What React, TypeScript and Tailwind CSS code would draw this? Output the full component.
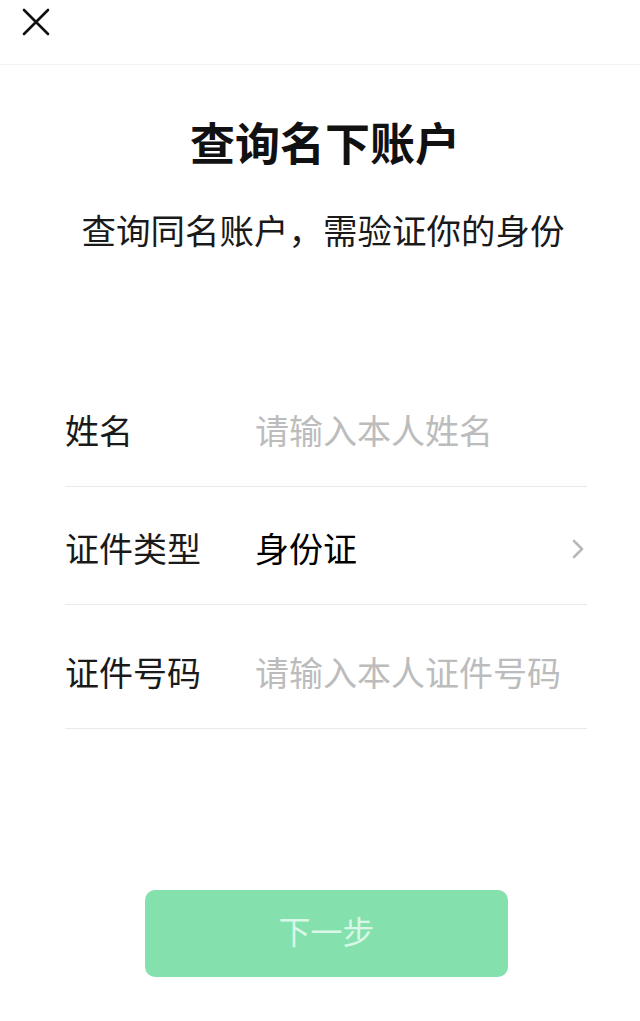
const font = "font-['Noto_Sans_CJK_SC','Noto_Sans',sans-serif]";

function Row({
  label,
  value,
  placeholder,
  chevron,
  height,
}: {
  label: string;
  value?: string;
  placeholder?: string;
  chevron?: boolean;
  height: string;
}) {
  return (
    <div className={`flex items-end border-b border-[#e9e9e9] pb-[39px] ${height}`}>
      <span className="w-[190px] shrink-0 text-[34px] leading-[34px] text-[#1a1a1a]">{label}</span>
      {value ? (
        <span className="flex-1 text-[34px] leading-[34px] text-[#000]">{value}</span>
      ) : (
        <span className="flex-1 text-[34px] leading-[34px] text-[#bcbcbc]">{placeholder}</span>
      )}
      {chevron && (
        <svg width="14" height="20" viewBox="0 0 14 20" className="mb-[6px] mr-[2px]">
          <polyline points="3,2 11,10 3,18" fill="none" stroke="#b9b9b9" strokeWidth="2.6" strokeLinecap="round" strokeLinejoin="round" />
        </svg>
      )}
    </div>
  );
}

export default function App() {
  return (
    <div className={`min-h-[1021px] w-[640px] bg-white ${font}`}>
      {/* Header */}
      <div className="flex h-[65px] items-start border-b border-[#f2f2f2] pl-[22px] pt-[8px]">
        <svg width="28" height="28" viewBox="0 0 28 28">
          <path d="M2 2 L26 26 M26 2 L2 26" stroke="#111" strokeWidth="2.6" strokeLinecap="round" />
        </svg>
      </div>

      <h1 className="mt-[54px] pl-[10px] text-center text-[45px] leading-[45px] font-bold text-[#111]">查询名下账户</h1>
      <p className="mt-[48px] pl-[6px] text-center text-[34.5px] leading-[34px] text-[#1a1a1a]">
        查询同名账户，需验证你的身份
      </p>

      {/* Form */}
      <div className="ml-[65px] mr-[53px] mt-[121px]">
        <Row label="姓名" placeholder="请输入本人姓名" height="h-[120px]" />
        <Row label="证件类型" value="身份证" chevron height="h-[118px]" />
        <Row label="证件号码" placeholder="请输入本人证件号码" height="h-[124px]" />
      </div>

      <button className="ml-[145px] mt-[161px] flex h-[87px] w-[363px] items-center justify-center rounded-[10px] bg-[#84e1ae] pb-[8px] text-[32px] text-[#d9f7e6]">
        下一步
      </button>
    </div>
  );
}
